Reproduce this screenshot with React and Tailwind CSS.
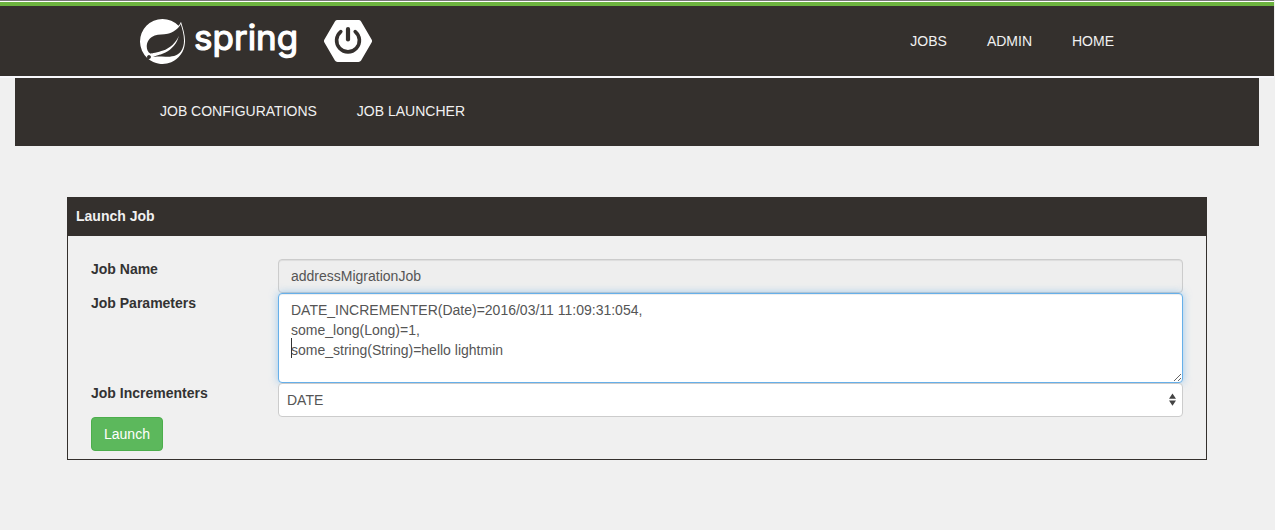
import { SiSpring } from "react-icons/si";

const mainLinks = ["JOBS", "ADMIN", "HOME"];
const subLinks = ["JOB CONFIGURATIONS", "JOB LAUNCHER"];

const parameters = `DATE_INCREMENTER(Date)=2016/03/11 11:09:31:054,
some_long(Long)=1,
some_string(String)=hello lightmin`;

function NavLinks({ links, label }) {
  return (
    <nav aria-label={label}>
      <ul className="flex">
        {links.map((text) => (
          <li key={text}>
            <a href="#" className="block px-5 py-[23px] text-[#f1f1f1]">
              {text}
            </a>
          </li>
        ))}
      </ul>
    </nav>
  );
}

function BootIcon() {
  return (
    <svg viewBox="0 0 48 42" className="ml-3.5 h-[42px] w-12">
      <path
        d="M13.5 3h21L45 21 34.500 39h-21L3 21z"
        fill="currentColor"
        stroke="currentColor"
        strokeWidth="6"
        strokeLinejoin="round"
      />
      <g fill="none" stroke="#34302d" strokeLinecap="round">
        <path d="M16.800 11.600A11.400 11.400 0 1 0 31.200 11.600" strokeWidth="3.600" />
        <path d="M24 9v10.500" strokeWidth="4.200" />
      </g>
    </svg>
  );
}

function Logo() {
  return (
    <a href="#" aria-label="Spring Boot" className="flex items-center text-white">
      <SiSpring className="size-[45px]" />
      <svg viewBox="0 0 125 60" className="h-[60px] w-[125px] overflow-visible">
        <text
          x="9"
          y="39"
          fill="currentColor"
          stroke="currentColor"
          strokeWidth="1.2"
          strokeLinejoin="round"
          className="font-['Inter',sans-serif] text-[35px] font-normal"
        >
          spring
        </text>
      </svg>
      <BootIcon />
    </a>
  );
}

function Row({ label, id, children }) {
  return (
    <div className="flex">
      <label htmlFor={id} className="w-1/6 px-[15px] font-bold">
        {label}
      </label>
      <div className="relative w-5/6 px-[15px]">{children}</div>
    </div>
  );
}

export default function App() {
  return (
    <div className="min-h-screen bg-[#f0f0f0] pr-px font-['Liberation_Sans',Arial,sans-serif] text-sm leading-5 text-[#333333]">
      <header className="border-t border-b-2 border-t-[#777777] border-b-[#f8f8fc] bg-white pt-px">
        <div className="border-t-4 border-[#6db33f] bg-[#34302d]">
          <div className="mx-auto flex h-[70px] max-w-[994px] items-center justify-between">
            <Logo />
            <NavLinks links={mainLinks} label="Main" />
          </div>
        </div>
      </header>

      <div className="mx-[15px] bg-[#34302d] pb-0.5">
        <div className="mx-auto max-w-[994px]">
          <NavLinks links={subLinks} label="Jobs" />
        </div>
      </div>

      <main className="mx-auto mt-[51px] max-w-[1140px] border border-[#34302d]">
        <h1 className="bg-[#34302d] px-2 pt-2 pb-[10px] font-bold text-[#f1f1f1]">Launch Job</h1>
        <form className="px-2 pt-[23px] pb-2" onSubmit={(e) => e.preventDefault()}>
          <Row label="Job Name" id="job-name">
            <input
              id="job-name"
              readOnly
              defaultValue="addressMigrationJob"
              className="block h-[34px] w-full rounded border border-[#cccccc] bg-[#eeeeee] px-3 text-[#555555] shadow-[inset_0_1px_1px_rgba(0,0,0,0.075)] outline-none"
            />
          </Row>
          <Row label="Job Parameters" id="job-parameters">
            <textarea
              id="job-parameters"
              defaultValue={parameters}
              className="block h-[90px] w-full resize rounded border border-[#66afe9] bg-white px-3 py-1.5 text-[#555555] shadow-[inset_0_1px_1px_rgba(0,0,0,0.075),0_0_8px_rgba(102,175,233,0.6)] outline-none"
            />
            <span className="absolute top-[45px] left-7 h-5 w-px bg-[#333333]" />
          </Row>
          <Row label="Job Incrementers" id="job-incrementers">
            <select
              id="job-incrementers"
              className="block h-[34px] w-full appearance-none rounded border border-[#cccccc] bg-white px-2 text-[#555555] outline-none"
            >
              <option>DATE</option>
            </select>
            <svg
              viewBox="0 0 7 13"
              className="pointer-events-none absolute top-[10px] right-[22px] h-[13px] w-[7px] fill-[#444444]"
            >
              <path d="M3.5 0.5 7 5.8H0zM3.5 12.8 7 7.5H0z" />
            </svg>
          </Row>
          <div className="px-[15px]">
            <button
              type="submit"
              className="block h-[34px] rounded border border-[#4cae4c] bg-[#5cb85c] px-3 text-white"
            >
              Launch
            </button>
          </div>
        </form>
      </main>
    </div>
  );
}
